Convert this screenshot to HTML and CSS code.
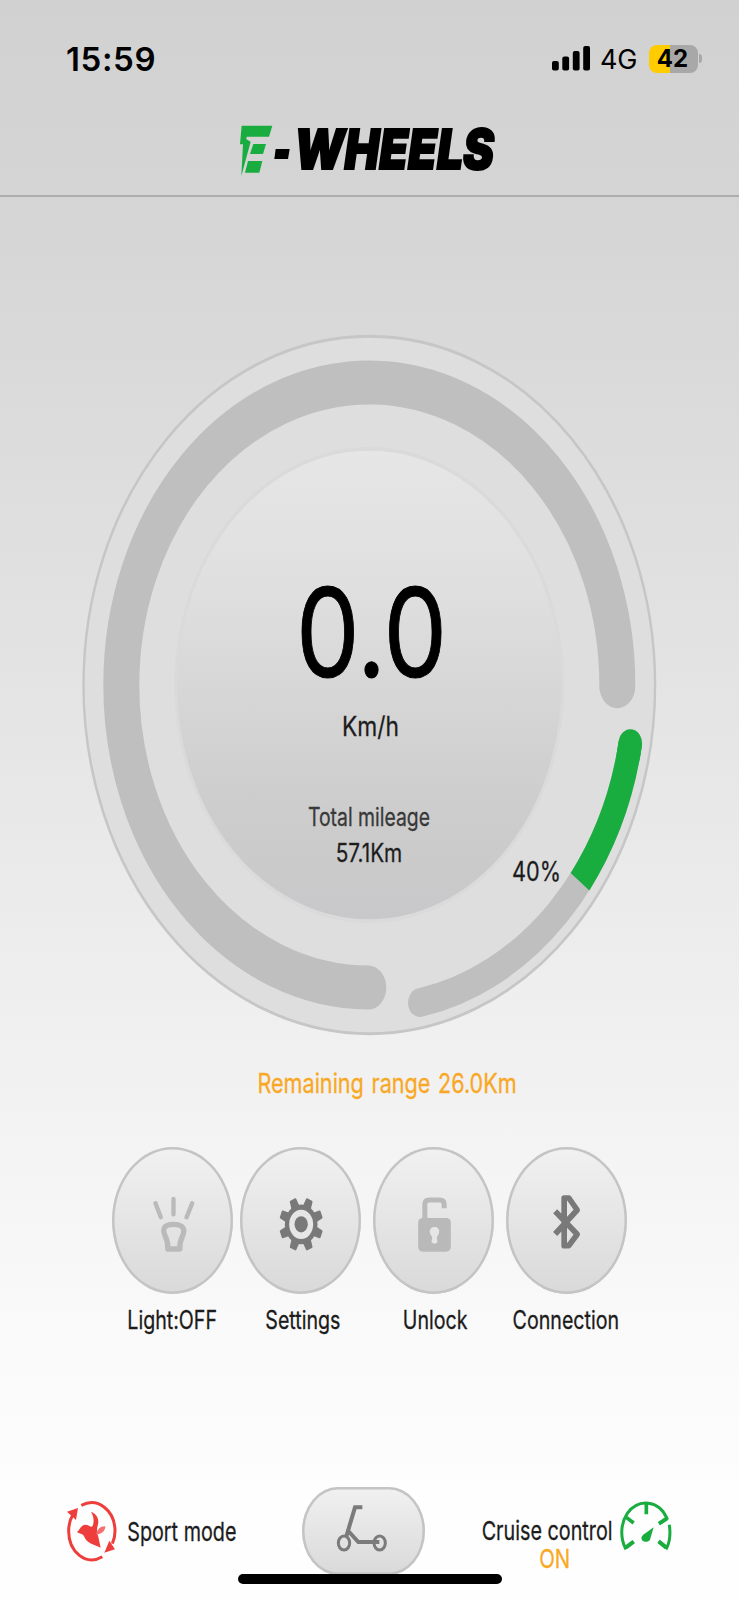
FILE: index.html
```html
<!DOCTYPE html>
<html lang="en">
<head>
    <meta charset="UTF-8">
    <title>E-Wheels</title>
    <link rel="stylesheet" href="styles.css">
</head>
<body>
<div class="screen">
    <div class="status">
        <span class="time">15:59</span>
        <svg class="signal" width="38" height="25" viewBox="0 0 38 25">
            <rect x="0" y="15" width="6.8" height="9.5" rx="2"/>
            <rect x="10.3" y="10.5" width="6.8" height="14" rx="2"/>
            <rect x="20.8" y="5" width="6.8" height="19.5" rx="2"/>
            <rect x="31.2" y="0" width="6.8" height="24.5" rx="2"/>
        </svg>
        <span class="net">4G</span>
        <div class="battery"><span>42</span></div>
        <i class="nub"></i>
    </div>

    <div class="header">
        <svg width="290" height="80" viewBox="0 0 870 240">
            <g fill="#19ac3f">
                <path d="M65 47H157L147 80H80L79 88L92 95L64 198L69 103H60Z"/>
                <path d="M100 102H138L129 132H90Z"/>
                <path d="M84 153H127L118 188H75Z"/>
            </g>
            <path d="M167 117H209L204 147H163Z"/>
            <text class="logo" x="223" y="178" textLength="599" lengthAdjust="spacingAndGlyphs">WHEELS</text>
        </svg>
    </div>

    <svg class="gauge" width="580" height="706" viewBox="79 332 580 706">
        <defs>
            <linearGradient id="disc" x1="0" y1="0" x2="0" y2="1">
                <stop offset="0" stop-color="#e6e6e6"/>
                <stop offset=".3" stop-color="#dfdfdf"/>
                <stop offset=".75" stop-color="#cdcdcd"/>
                <stop offset="1" stop-color="#c8c8ca"/>
            </linearGradient>
        </defs>
        <g transform="translate(369.3 685) scale(1 1.22)" fill="none">
            <circle r="285.8" fill="#dedede" stroke="#c6c6c6" stroke-width="2.4"/>
            <path d="M248 1A248 248 0 1 0 -1 248" stroke="#bfbfbf" stroke-width="36" stroke-linecap="round"/>
            <circle r="193.5" fill="url(#disc)" stroke="#dadada" stroke-width="3"/>
            <path d="M261 48A265.3 265.3 0 0 1 50.5 260.4" stroke="#bfbfbf" stroke-width="23.5" stroke-linecap="round"/>
            <path d="M261 48L259 58" stroke="#19ac3f" stroke-width="23.5" stroke-linecap="round"/>
            <path d="M261 48A265.3 265.3 0 0 1 210.7 161.2" stroke="#19ac3f" stroke-width="23.5"/>
        </g>
        <g class="gauge-text">
            <text class="speed" x="371.5" y="677" textLength="151" lengthAdjust="spacingAndGlyphs">0.0</text>
            <text class="unit" x="370.5" y="736" textLength="57" lengthAdjust="spacingAndGlyphs">Km/h</text>
            <text class="total" x="369" y="826" textLength="122" lengthAdjust="spacingAndGlyphs">Total mileage</text>
            <text class="km" x="369" y="861.5" textLength="66.5" lengthAdjust="spacingAndGlyphs">57.1Km</text>
            <text class="unit" x="536.5" y="881" textLength="49" lengthAdjust="spacingAndGlyphs">40%</text>
        </g>
    </svg>

    <div class="range"><span class="narrow">Remaining range 26.0Km</span></div>

    <div class="buttons">
        <div class="item">
            <div class="round">
                <svg viewBox="38 50 362 441" fill="none" stroke="#bababa" stroke-linecap="round" stroke-linejoin="round">
                    <path d="M168 219L184 261M222 206V252M278 219L261 261" stroke-width="13"/>
                    <path d="M205 356Q206 335 197 317C188 297 192 282 222 282S258 297 249 317Q240 335 241 356Z" stroke-width="16"/>
                </svg>
            </div>
            <span class="narrow light">Light:OFF</span>
        </div>
        <div class="item">
            <div class="round">
                <svg viewBox="422 50 362 441">
                    <g transform="translate(605 282) scale(1 1.22)" fill="#797979">
                        <g id="teeth">
                            <path id="tooth" d="M-10 -40L-7.500 -63H7.500L10 -40Z" transform="rotate(22.5)" stroke="#797979" stroke-width="6" stroke-linejoin="round"/>
                            <use href="#tooth" transform="rotate(45)"/>
                            <use href="#tooth" transform="rotate(90)"/>
                            <use href="#tooth" transform="rotate(135)"/>
                        </g>
                        <use href="#teeth" transform="rotate(180)"/>
                        <circle r="49"/>
                        <circle r="36" fill="#e6e6e6"/>
                        <circle r="20"/>
                    </g>
                </svg>
            </div>
            <span class="narrow settings">Settings</span>
        </div>
        <div class="item">
            <div class="round">
                <svg viewBox="26 50 362 441">
                    <path d="M181 268V222Q181 209 194 209H226Q239 209 239 222V234" fill="none" stroke="#bababa" stroke-width="15"/>
                    <rect x="161" y="263" width="98" height="101" rx="14" fill="#b9b9b9"/>
                    <path d="M210 290C199 290 195 298 196 306C197 314 203 318 203 322L201 336Q210 344 219 336L217 322C217 318 223 314 224 306C225 298 221 290 210 290Z" fill="#e6e6e6"/>
                </svg>
            </div>
            <span class="narrow unlock">Unlock</span>
        </div>
        <div class="item">
            <div class="round">
                <svg viewBox="426 50 362 441" fill="none" stroke="#797979" stroke-linejoin="round">
                    <path d="M573 243L639 312L614 346H600V203H614L639 239L573 311" stroke-width="17"/>
                </svg>
            </div>
            <span class="narrow connection">Connection</span>
        </div>
    </div>

    <div class="footer">
        <svg class="sport" width="52" height="64" viewBox="50 84 156 192" fill="none" stroke="#ee3e3c" stroke-width="9">
            <path d="M96 103C145 77 197 118 197 181C197 195 194 207 189 218"/>
            <path d="M159 257C110 286 58 243 58 181C58 161 62 146 70 132"/>
            <path d="M53 122L86 111L80 147Z" fill="#ee3e3c" stroke="none"/>
            <path d="M165 245L180 209L197 235Z" fill="#ee3e3c" stroke="none"/>
            <path d="M125 122C143 129 151 145 145 164C141 178 144 188 147 198L154 230C133 220 113 219 104 196C99 186 90 189 82 183C91 180 91 164 107 161C117 160 125 170 129 166C136 153 133 136 125 122Z" fill="#ee3e3c" stroke="none"/>
            <path d="M140 190C144 175 153 165 168 166C168 178 160 188 144 190Z" fill="#f4706c" stroke="none"/>
        </svg>
        <div class="mode"><span class="narrow">Sport mode</span></div>
        <div class="scooter">
            <svg width="122" height="88" viewBox="38 50 366 264" fill="none" stroke="#7b7b7b" stroke-width="9">
                <path d="M219 111H197L171 198M177 182L207 215H270" stroke-width="12"/>
                <ellipse cx="164" cy="218" rx="17" ry="21"/>
                <ellipse cx="271" cy="218" rx="17" ry="21"/>
            </svg>
        </div>
        <div class="cruise">
            <span class="narrow">Cruise control</span>
            <span class="narrow on">ON</span>
        </div>
        <svg class="dial" width="52" height="52" viewBox="480 88 156 156" fill="none" stroke="#19ac3f" stroke-width="9">
            <path d="M521 213L496 232C480 200 482 157 502 128C535 83 596 87 621 143L597 159M628 162C632 190 630 212 620 232L596 212"/>
            <path d="M559 98V131M499 140L521 157" stroke-width="11"/>
            <path d="M521 213L497 231M596 212L619 231M621 143L597 159" stroke-width="12"/>
            <path d="M581 170L570 207C562 219 540 212 545 198Q548 192 557 187Z" fill="#19ac3f" stroke="none"/>
        </svg>
    </div>
    <div class="home"></div>
</div>
</body>
</html>
```
FILE: styles.css
```css
* {
    padding: 0;
    margin: 0;
    box-sizing: border-box;
}

body {
    font-family: Inter, "Liberation Sans", sans-serif;
    color: #1c1c1c;
}

.screen {
    width: 739px;
    height: 1600px;
    overflow: hidden;
    position: relative;
    background: linear-gradient(#d1d1d1 0, #d5d5d5 200px, #d9d9d9 340px, #e3e3e3 660px, #eee 980px, #f4f4f4 1160px, #fafafa 1340px, #fcfcfc 1460px, #fefefe 1490px);
}

/* 状态栏 */
.status {
    height: 117px;
    padding: 0 37px 0 66px;
    display: flex;
    align-items: center;
    color: #000;
}

.time {
    flex: 1;
    font-size: 33px;
    font-weight: 600;
    letter-spacing: 0.6px;
}

.net {
    width: 39px;
    margin: 1px 0 0 10px;
    font-size: 27px;
    letter-spacing: -0.2px;
}

.battery {
    width: 49px;
    height: 28px;
    margin-left: 10px;
    border-radius: 8px;
    background: linear-gradient(90deg, #fc0 42%, #a8a8a8 42%);
    line-height: 28px;
    text-align: center;
    font-size: 24px;
    font-weight: 700;
    text-indent: -2px;
}

.nub {
    width: 3px;
    height: 9px;
    margin-left: 1px;
    border-radius: 0 3px 3px 0;
    background: #a8a8a8;
}

.header {
    height: 80px;
    padding-right: 9px;
    border-bottom: 2px solid #adadad;
    display: flex;
    justify-content: center;
    align-items: flex-end;
}

.header svg {
    margin-bottom: 5px;
    overflow: visible;
}

.logo {
    font-size: 163px;
    font-weight: 900;
    font-style: italic;
    stroke: #000;
    stroke-width: 6px;
}

/* 仪表盘 */
.gauge {
    display: block;
    margin: 135px 0 0 79px;
}

.gauge-text {
    text-anchor: middle;
    fill: #1a1a1a;
}

.speed {
    font-size: 123px;
    fill: #000;
    stroke: #000;
    stroke-width: 1px;
}

.unit {
    font-size: 27px;
}

.total {
    font-size: 25px;
    fill: #3a3a3a;
}

.km {
    font-size: 25px;
}

.unit,
.total,
.km {
    stroke: #333;
    stroke-width: .3px;
}

/* 文字压窄 */
.narrow {
    display: block;
    white-space: nowrap;
    transform: scaleX(.785);
    -webkit-text-stroke: .3px currentColor;
}

.range {
    margin-top: 29px;
    padding-left: 35px;
    display: flex;
    justify-content: center;
    font-size: 27px;
    line-height: 34px;
    color: #f9a825;
}

.range .narrow {
    transform: scaleX(.8);
    word-spacing: 2px;
}

.buttons {
    margin: 46px 0 0 112px;
    display: grid;
    grid-template-columns: 128px 133px 133px 121px;
}

.item {
    width: 121px;
    display: flex;
    flex-direction: column;
    align-items: center;
    font-size: 25px;
    line-height: 30px;
    gap: 11px;
}

.round {
    width: 121px;
    height: 147px;
    border-radius: 50%;
    background: linear-gradient(#f1f1f1, #d9d9d9);
    box-shadow: inset 0 0 0 2.5px #c4c4c4;
}

.round svg {
    display: block;
    width: 100%;
    height: 100%;
}

.settings {
    margin-left: 5px;
}

.unlock {
    margin-left: 4px;
}

.connection {
    margin-left: -2px;
}

.footer {
    height: 113px;
    margin-top: 152px;
    padding-left: 66px;
    display: flex;
    align-items: flex-start;
    font-size: 26px;
    line-height: 30px;
}

.sport {
    margin-top: 12px;
}

.mode {
    width: 127px;
    margin: 30px 0 0 0;
    display: flex;
    justify-content: center;
}

.footer .narrow {
    transform: scaleX(.76);
}

.scooter {
    width: 123px;
    height: 88px;
    margin-left: 57px;
    border-radius: 36px / 44px;
    background: linear-gradient(#f1f1f1, #d9d9d9);
    box-shadow: inset 0 0 0 2.5px #c4c4c4;
}

.cruise {
    width: 130px;
    margin: 30px 0 0 57px;
    display: flex;
    flex-direction: column;
    align-items: center;
    line-height: 28px;
}

.on {
    margin-left: 15px;
}

.footer .on {
    color: #f9a825;
    transform: scaleX(.785);
}

.dial {
    margin: 13px 0 0 8px;
}

.home {
    width: 264px;
    height: 10px;
    border-radius: 5px;
    background: #000;
    position: absolute;
    left: 238px;
    top: 1574px;
}
```
